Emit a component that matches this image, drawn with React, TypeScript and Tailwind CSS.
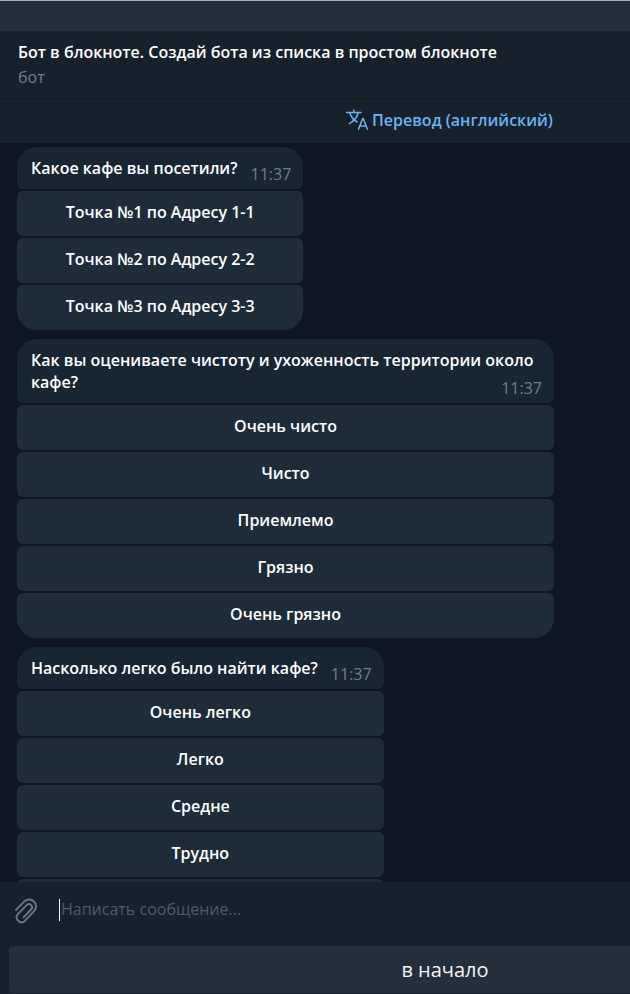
import { useState } from "react";
import { clsx } from "clsx";

interface Message {
    id: number;
    text: string;
    time: string;
    options: string[];
}

const MESSAGES: Message[] = [
    {
        id: 1,
        text: "Какое кафе вы посетили?",
        time: "11:37",
        options: ["Точка №1 по Адресу 1-1", "Точка №2 по Адресу 2-2", "Точка №3 по Адресу 3-3"],
    },
    {
        id: 2,
        text: "Как вы оцениваете чистоту и ухоженность территории около кафе?",
        time: "11:37",
        options: ["Очень чисто", "Чисто", "Приемлемо", "Грязно", "Очень грязно"],
    },
    {
        id: 3,
        text: "Насколько легко было найти кафе?",
        time: "11:37",
        options: ["Очень легко", "Легко", "Средне", "Трудно", ""],
    },
];

function TranslateIcon() {
    return (
        <svg
            width="24"
            height="22"
            viewBox="0 0 24 22"
            fill="none"
            stroke="currentColor"
            strokeWidth="1.5"
            strokeLinecap="round"
            strokeLinejoin="round"
            aria-hidden="true"
        >
            <path d="M1.500 3.500h14.500M8.800 1v2.500M4.800 3.800c1.200 3.900 3.900 7.300 7.200 9.200M13.200 3.800c-1.200 4.600-4.600 8.600-9 10.800" />
            <path d="M13.500 20.300l4.200-10.800h.5l4.200 10.800M14.900 17h6.200" />
        </svg>
    );
}

function AttachIcon() {
    return (
        <svg
            width="24"
            height="28"
            viewBox="0 0 24 28"
            fill="none"
            stroke="currentColor"
            strokeWidth="1.9"
            strokeLinecap="round"
            strokeLinejoin="round"
            aria-hidden="true"
        >
            <path d="M2 12.900L10.700 4.200A6.800 6.800 0 0 1 20.300 13.800L10.700 24.200A5 5 0 0 1 3.700 17.200L12.700 8.100A3.100 3.100 0 0 1 17.100 12.500L9.700 20.200" />
        </svg>
    );
}

function MessageBlock({ message }: { message: Message }) {
    return (
        <article className="flex w-fit max-w-[537px] flex-col gap-0.5">
            <div className="rounded-t-[20px] rounded-b-md bg-[#182533] py-2.5 pr-3 pl-3.5">
                <p className="font-semibold">
                    {message.text}
                    <time className="float-right mt-1.5 -mb-1.5 ml-[13px] font-normal text-[#6d7f8f]">{message.time}</time>
                </p>
            </div>
            {message.options.map((option, i) => (
                <button
                    key={i}
                    type="button"
                    className={clsx(
                        "h-[45px] w-full shrink-0 rounded-md bg-[#1e2c3a] pb-1 font-semibold hover:bg-[#263646]",
                        i === message.options.length - 1 && "rounded-b-[20px]"
                    )}
                >
                    {option}
                </button>
            ))}
        </article>
    );
}

export default function App() {
    const [draft, setDraft] = useState("");

    return (
        <div className="flex h-screen flex-col overflow-hidden bg-[#0e1621] font-['Open_Sans','Noto_Sans',sans-serif] text-[16px] leading-[22px] text-white">
            {/* Title bar */}
            <div className="h-[31px] shrink-0 border-t border-[#a9adad] bg-[#242f3d]" />

            <header className="shrink-0 bg-[#17212b]">
                <div className="h-[68px] border-b border-[#101921] px-[18px] pt-2.5">
                    <h1 className="truncate font-semibold">Бот в блокноте. Создай бота из списка в простом блокноте</h1>
                    <p className="mt-[3px] text-[#6d7f8f]">бот</p>
                </div>
                <div className="flex h-11 items-center justify-center pb-0.5 pl-[268px]">
                    <button type="button" className="flex items-center gap-[3px] font-semibold whitespace-nowrap text-[#6ab3f3]">
                        <TranslateIcon />
                        Перевод (английский)
                    </button>
                </div>
            </header>

            <main className="flex min-h-0 flex-1 flex-col gap-[9px] overflow-hidden pt-1 pr-4 pl-[17px]">
                {MESSAGES.map((message) => (
                    <MessageBlock key={message.id} message={message} />
                ))}
            </main>

            <footer className="shrink-0 bg-[#17212b] pb-px">
                <div className="flex h-16 items-center pb-2 pl-3.5">
                    <button type="button" aria-label="Прикрепить" className="pt-0.5 text-[#6c7883]">
                        <AttachIcon />
                    </button>
                    <input
                        type="text"
                        aria-label="Сообщение"
                        value={draft}
                        onChange={(e) => setDraft(e.target.value)}
                        placeholder="Написать сообщение..."
                        className="ml-[21px] h-[22px] min-w-0 flex-1 border-l border-white bg-transparent pb-0.5 pl-px placeholder:text-[#4f5b66] focus:outline-none"
                    />
                </div>
                <div className="pl-[9px]">
                    <button
                        type="button"
                        className="flex h-[47px] w-full items-center justify-center rounded-l bg-[#242f3d] pl-[251px] text-[20px] text-[#f5f5f5]"
                    >
                        в начало
                    </button>
                </div>
            </footer>
        </div>
    );
}
